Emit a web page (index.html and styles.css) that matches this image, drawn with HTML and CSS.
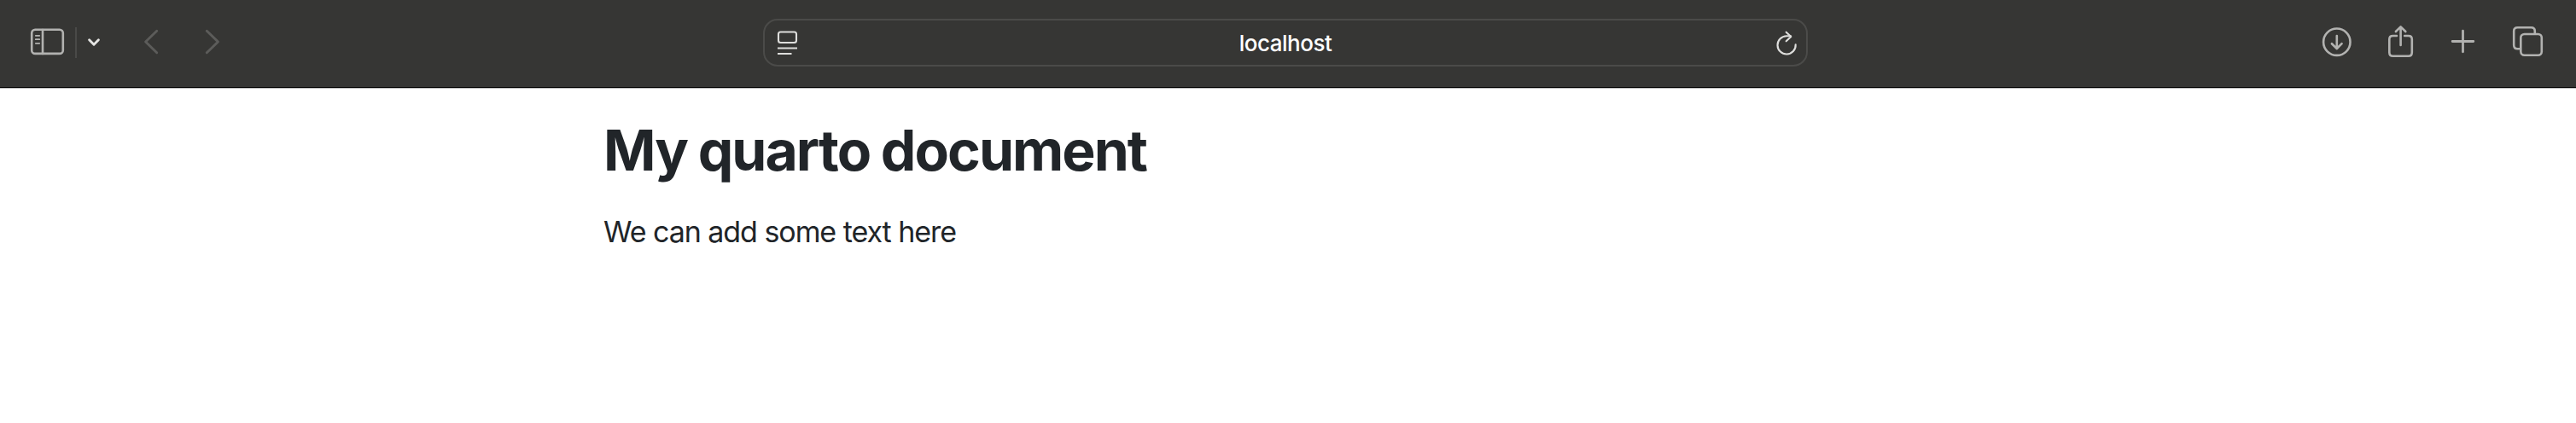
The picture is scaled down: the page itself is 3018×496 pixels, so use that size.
FILE: index.html
```html
<!DOCTYPE html>
<html lang="en">
<head>
<meta charset="utf-8">
<title>My quarto document</title>
<link rel="stylesheet" href="styles.css">
</head>
<body>
<header class="toolbar">
  <div class="group nav">
    <svg class="icon" width="44" height="102" viewBox="34 0 44 102"><rect x="37.2" y="34.7" width="36.6" height="28.2" rx="4"/><path d="M50 35v28"/><path class="fine" d="M41.8 41.8h4.4M41.8 46.2h4.4M41.8 50.8h4.4"/></svg>
    <span class="divider"></span>
    <svg class="icon bright" width="24" height="102" viewBox="98 0 24 102"><path d="M104.6 46.8L110 52.2L115.4 46.8"/></svg>
    <svg class="icon dim back" width="24" height="102" viewBox="165 0 24 102"><path d="M183.7 36.2L170.6 49L183.7 61.8"/></svg>
    <svg class="icon dim forward" width="24" height="102" viewBox="237 0 24 102"><path d="M242.3 36.2L255.4 49L242.3 61.8"/></svg>
  </div>
  <div class="address">
    <svg class="icon light" width="28" height="52" viewBox="909 24 28 52"><rect x="912" y="37.5" width="21" height="12.5" rx="2.5"/><path class="flat" d="M911 56.5h23M911 63h16.5"/></svg>
    <span class="host">localhost</span>
    <svg class="icon light" width="28" height="52" viewBox="2079 24 28 52"><path d="M2103.7 52.3A10.6 10.6 0 1 1 2093.1 42.3H2098"/><path d="M2092.7 37.7L2098.3 43L2092.7 48.3"/></svg>
  </div>
  <div class="group actions">
    <svg class="icon" width="40" height="102" viewBox="2718 0 40 102"><circle cx="2737.8" cy="49.2" r="15.7"/><path d="M2737.8 42v14M2731.9 51.2L2737.8 57L2743.6 51.2"/></svg>
    <svg class="icon" width="36" height="102" viewBox="2794 0 36 102"><path d="M2808 42H2803.5Q2799.3 42 2799.3 46V61.6Q2799.3 65.8 2803.5 65.8H2821.7Q2825.8 65.8 2825.8 61.6V46Q2825.8 42 2821.7 42H2817.2"/><path d="M2812.6 53V32M2806.9 37L2812.6 31.4L2818.3 37"/></svg>
    <svg class="icon heavy" width="32" height="102" viewBox="2869 0 32 102"><path d="M2873.2 48.5h24.6M2885.5 36.2v24.6"/></svg>
    <svg class="icon" width="40" height="102" viewBox="2941 0 40 102"><path d="M2952.5 57.3H2949.5Q2945.2 57.3 2945.2 53V36.5Q2945.2 32.3 2949.5 32.3H2965.5Q2969.8 32.3 2969.8 36.5V39.5"/><rect x="2953.3" y="40" width="24.5" height="24.8" rx="4.2"/></svg>
  </div>
</header>
<main class="document">
  <h1 class="title">My quarto document</h1>
  <p class="text">We can add some text here</p>
</main>
</body>
</html>
```
FILE: styles.css
```css
body {
  margin: 0;
  background: #fff;
  color: #212529;
  font-family: Inter, "Liberation Sans", sans-serif;
}

.toolbar {
  display: grid;
  grid-template-columns: 894px 1224px 1fr;
  align-items: center;
  height: 102px;
  background: #363634;
  border-bottom: 1px solid #000;
  box-shadow: 0 1px 0 #b9b9b9;
}

.group {
  display: flex;
  align-items: center;
}

.nav {
  padding-left: 34px;
}

.icon {
  display: block;
  flex: none;
  fill: none;
  stroke: #b2b2b0;
  stroke-width: 2.6;
  stroke-linecap: round;
  stroke-linejoin: round;
}

.fine {
  stroke-width: 1.8;
}

.bright {
  stroke: #e4e4e2;
  stroke-width: 2.9;
}

.dim {
  stroke: #5c5c5a;
  stroke-width: 2.9;
}

.light {
  stroke: #dededc;
  stroke-width: 2.1;
}

.flat {
  stroke-linecap: butt;
}

.heavy {
  stroke-width: 2.8;
}

.divider {
  width: 2px;
  height: 36px;
  margin: 0 8px 2px 10px;
  background: #4a4a48;
}

.back {
  margin-left: 43px;
}

.forward {
  margin-left: 48px;
}

.address {
  box-sizing: border-box;
  display: flex;
  align-items: center;
  justify-content: space-between;
  height: 56px;
  margin-top: -2px;
  padding: 0 9px 0 13px;
  border: 2px solid #4b4b49;
  border-radius: 17px;
}

.host {
  margin-right: 4px;
  padding-top: 2px;
  color: #fff;
  font-size: 26px;
  font-weight: 500;
  line-height: 50px;
  letter-spacing: -0.5px;
}

.actions {
  justify-content: flex-end;
  padding-right: 37px;
}

.actions .icon + .icon {
  margin-left: 36px;
}

.actions .heavy.icon {
  margin-left: 39px;
}

.actions .heavy + .icon {
  margin-left: 40px;
}

.document {
  padding: 33px 707px 0;
}

.title {
  margin: 0;
  font-size: 66px;
  font-weight: 700;
  line-height: 80px;
  letter-spacing: -1.95px;
  word-spacing: -1px;
}

.text {
  margin: 30px 0 0;
  font-size: 34px;
  line-height: 51px;
  letter-spacing: -1.05px;
}
```
